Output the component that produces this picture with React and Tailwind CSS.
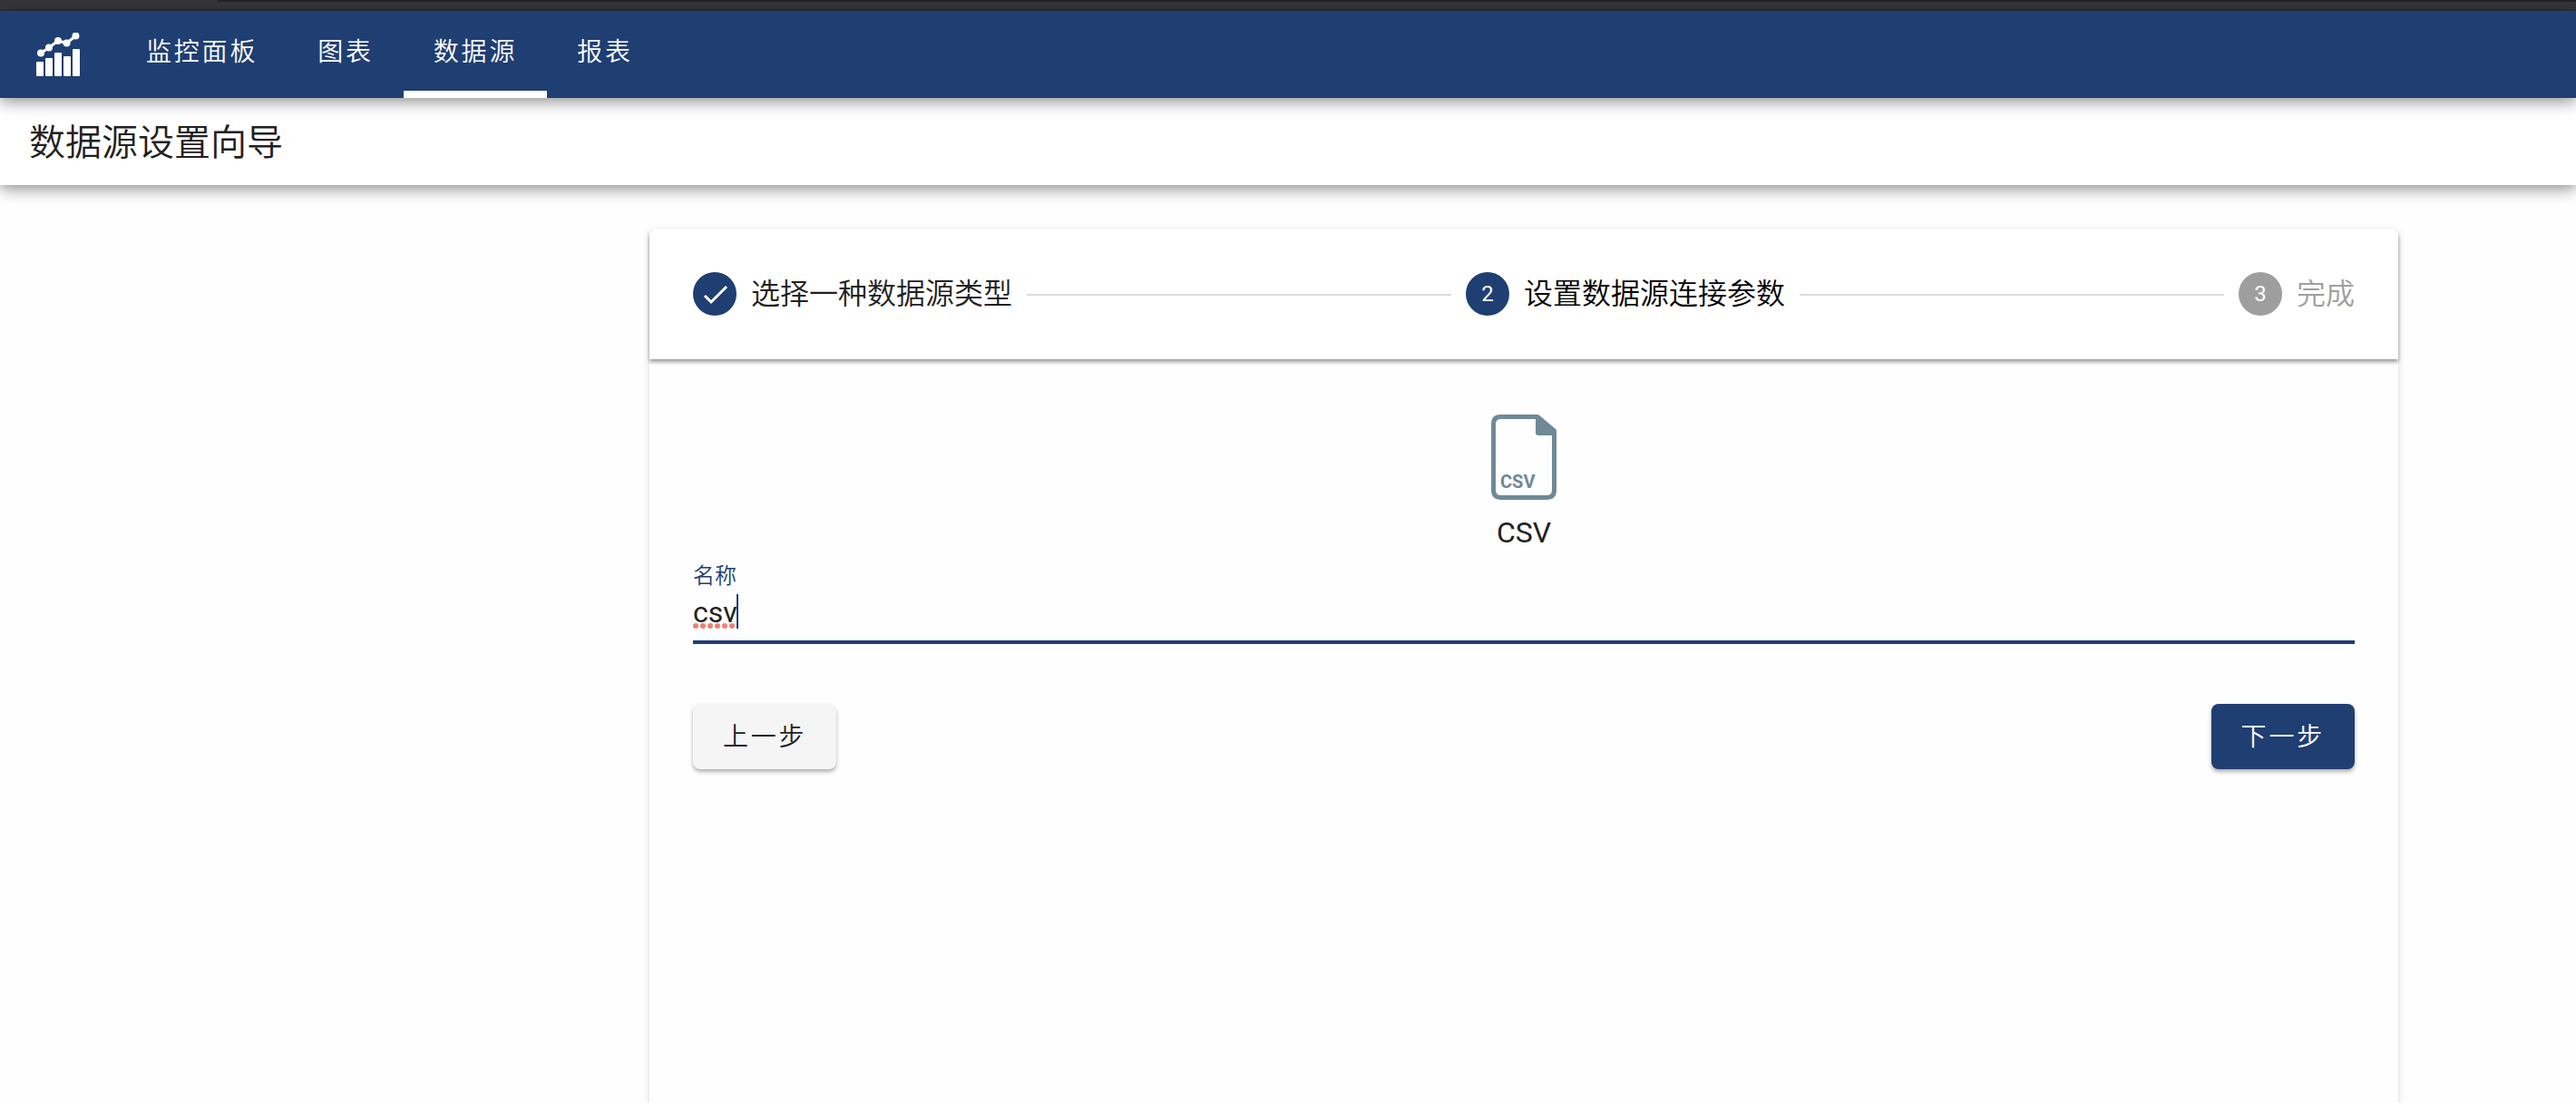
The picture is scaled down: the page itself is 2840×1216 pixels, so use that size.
const tabs = [
  { label: '监控面板', active: false },
  { label: '图表', active: false },
  { label: '数据源', active: true },
  { label: '报表', active: false },
];

const CARD_SHADOW =
  'shadow-[0_2px_2px_rgba(0,0,0,0.08),0_2px_10px_rgba(0,0,0,0.12)]';

function Logo() {
  return (
    <svg viewBox="0 0 48 48" className="h-12 w-12" fill="#fff" aria-label="Logo" role="img">
      <rect x="0" y="32" width="8" height="16" rx="1" />
      <rect x="10" y="28" width="8" height="20" rx="1" />
      <rect x="20" y="22" width="8" height="26" rx="1" />
      <rect x="30" y="26" width="8" height="22" rx="1" />
      <rect x="40" y="18" width="8" height="30" rx="1" />
      <path d="M5 22.500L14 16.500L24 9L33.500 11.500L43.500 3.500" fill="none" stroke="#fff" strokeWidth="3" />
      <circle cx="5" cy="22.500" r="4" />
      <circle cx="14" cy="16.500" r="4" />
      <circle cx="24" cy="9" r="4" />
      <circle cx="33.500" cy="11.500" r="4" />
      <circle cx="43.500" cy="3.500" r="4" />
    </svg>
  );
}

function CsvIcon() {
  return (
    <svg viewBox="0 0 72 94" className="h-[94px] w-[72px]" aria-hidden="true">
      <path
        d="M10 2.500H51L69.500 18V83Q69.500 91.500 61 91.500H11Q2.500 91.500 2.500 83V11Q2.500 2.500 10 2.500Z"
        fill="none"
        stroke="#6f8997"
        strokeWidth="5"
        strokeLinejoin="round"
      />
      <path d="M49 1H53L71 17V23H52Q49 23 49 20Z" fill="#6f8997" />
      <text
        x="10"
        y="81"
        fill="#6f8997"
        fontSize="20"
        fontWeight="700"
        fontFamily="Roboto, sans-serif"
      >
        CSV
      </text>
    </svg>
  );
}

function CheckMark() {
  return (
    <svg viewBox="0 0 48 48" className="h-12 w-12" aria-hidden="true">
      <path d="M13 26L20 33L37 16" fill="none" stroke="#fff" strokeWidth="3" />
    </svg>
  );
}

function Step({ badge, label, badgeClass, labelClass }) {
  return (
    <li className="flex items-center gap-4">
      <span
        className={`flex h-12 w-12 items-center justify-center rounded-full text-2xl text-white ${badgeClass}`}
      >
        {badge}
      </span>
      <span className={`text-[32px] leading-8 font-[350] ${labelClass}`}>{label}</span>
    </li>
  );
}

function StepLine() {
  return <li aria-hidden="true" className="mt-0.5 h-0.5 flex-1 bg-[#dcdcdc]" />;
}

export default function App() {
  return (
    <div className="flex min-h-screen flex-col bg-[#fefefe] font-['Roboto','Noto_Sans_CJK_SC',sans-serif] text-[#212121]">
      <div className="h-3 border-t-2 border-b-2 border-t-[#232428] border-b-[#2c2e35] bg-[#363639]">
        <div className="-mt-0.5 h-0.5 w-60 bg-[#363639]" />
      </div>

      <header className="relative z-20 flex h-24 bg-[#1f3e72] pl-10 shadow-[0_4px_16px_rgba(0,0,0,0.45)]">
        <a href="#" className="mt-6 mr-10 h-12 w-12">
          <Logo />
        </a>
        <nav className="flex">
          {tabs.map((tab) => (
            <a
              key={tab.label}
              href="#"
              aria-current={tab.active ? 'page' : undefined}
              className={`flex items-center border-b-8 px-[33px] pt-1 text-[28px] font-[350] tracking-widest text-white ${
                tab.active ? 'border-white' : 'border-transparent'
              }`}
            >
              {tab.label}
            </a>
          ))}
        </nav>
      </header>

      <div className="relative z-10 flex h-24 items-center bg-white px-8 pt-1 shadow-[0_4px_16px_rgba(0,0,0,0.45)]">
        <h1 className="text-[40px] leading-10 font-[350]">数据源设置向导</h1>
      </div>

      <main className={`mt-12 mr-[196px] ml-[716px] flex-1 rounded-t-lg bg-[#fefefe] ${CARD_SHADOW}`}>
        <ol className="flex items-center gap-4 rounded-t-lg bg-white p-12 shadow-[0_3px_4px_rgba(0,0,0,0.4)]">
          <Step badge={<CheckMark />} label="选择一种数据源类型" badgeClass="bg-[#1f3e72]" labelClass="text-[#212121]" />
          <StepLine />
          <Step badge="2" label="设置数据源连接参数" badgeClass="bg-[#1f3e72]" labelClass="text-black" />
          <StepLine />
          <Step badge="3" label="完成" badgeClass="bg-[#9e9e9e]" labelClass="text-[#9e9e9e]" />
        </ol>

        <form className="px-12 pt-[61px]" onSubmit={(e) => e.preventDefault()}>
          <div className="flex flex-col items-center">
            <CsvIcon />
            <p className="mt-4 text-[32px] leading-10">CSV</p>
          </div>

          <div className="mt-3 flex flex-col border-b-4 border-[#1f3e72]">
            <label htmlFor="source-name" className="text-2xl font-[350] text-[#1f3e72]">
              名称
            </label>
            <div className="relative mt-1 pb-[11px]">
              <input
                id="source-name"
                type="text"
                defaultValue="csv"
                spellCheck={false}
                className="block h-10 w-full bg-transparent text-[32px] leading-10 outline-none"
              />
              <span className="absolute top-0 left-12 h-[38px] w-0.5 bg-[#1f3e72]" />
              <svg viewBox="0 0 48 6" className="absolute top-8 left-0 h-1.5 w-12" aria-hidden="true">
                {[3, 11, 19, 27, 35, 43].map((cx) => (
                  <circle key={cx} cx={cx} cy="3" r="3" fill="#ee7f79" />
                ))}
              </svg>
            </div>
          </div>

          <div className="mt-[66px] flex justify-between">
            <button
              type="button"
              className="h-[72px] rounded-lg bg-[#f5f5f5] px-[33px] pt-0.5 text-[28px] font-[350] tracking-widest shadow-[0_3px_4px_rgba(0,0,0,0.3)]"
            >
              上一步
            </button>
            <button
              type="submit"
              className="h-[72px] rounded-lg bg-[#1f3e72] px-[33px] pt-0.5 text-[28px] font-[350] tracking-widest text-white shadow-[0_3px_4px_rgba(0,0,0,0.3)]"
            >
              下一步
            </button>
          </div>
        </form>
      </main>
    </div>
  );
}
